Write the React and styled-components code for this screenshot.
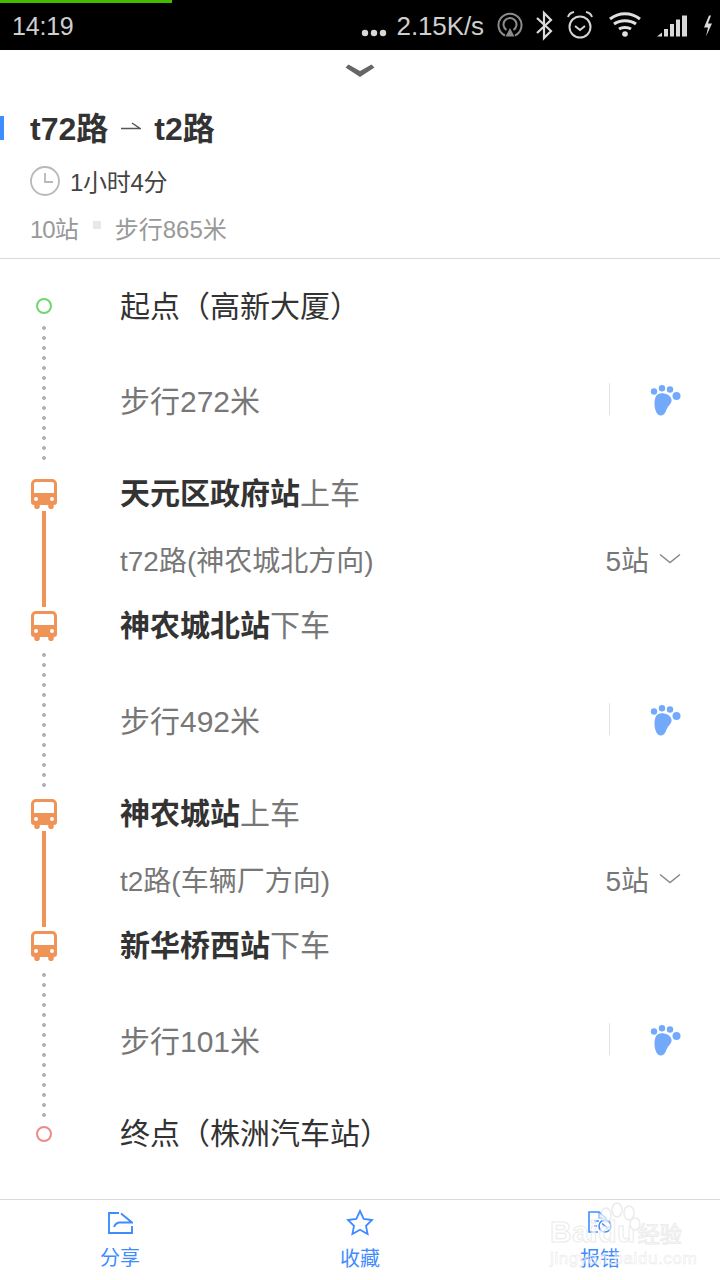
import React from "react";
import styled, { createGlobalStyle } from "styled-components";

const Global = createGlobalStyle`
  html, body { margin: 0; padding: 0; background: #fff; }
  body { font-family: "Liberation Sans", "Noto Sans CJK SC", sans-serif; }
  * { box-sizing: border-box; }
`;

const Page = styled.div`
  position: relative;
  width: 720px;
  height: 1280px;
  display: flex;
  flex-direction: column;
  overflow: hidden;
  background: #fff;
`;

const StatusBar = styled.div`
  height: 50px;
  flex: none;
  background: #000;
  display: flex;
  flex-direction: column;
  color: #cfcfcf;
`;
const Progress = styled.div`
  width: 172px;
  height: 3px;
  flex: none;
  background: #44bb00;
`;
const StatusRow = styled.div`
  flex: 1;
  display: flex;
  align-items: center;
  padding: 0 6px 0 12px;
`;
const Clock = styled.span`
  font-size: 25px;
  letter-spacing: -0.2px;
  flex: 1;
`;
const Speed = styled.span`
  font-size: 26px;
  letter-spacing: -0.1px;
  margin: 0 12px 0 10px;
`;
const MoreDots = styled.svg`
  display: block;
  flex: none;
  margin-top: 12px;
`;
const StatusIcons = styled.svg`
  display: block;
  flex: none;
`;

const Handle = styled.div`
  height: 42px;
  flex: none;
  display: flex;
  justify-content: center;
  padding-top: 13px;
`;

const Header = styled.header`
  flex: none;
  height: 167px;
  border-bottom: 1px solid #d9d9d9;
  display: flex;
  flex-direction: column;
`;
const TitleRow = styled.div`
  height: 46px;
  margin-top: 11px;
  display: flex;
  align-items: center;
`;
const Accent = styled.i`
  width: 4px;
  height: 24px;
  margin: 3px 26px 0 0;
  background: #3f8cff;
`;
const Title = styled.h1`
  margin: 0;
  font-size: 32px;
  font-weight: 700;
  color: #333;
  display: flex;
  align-items: center;
  gap: 13px;
`;
const DurationRow = styled.div`
  margin: 15px 0 0 30px;
  height: 32px;
  display: flex;
  align-items: center;
  gap: 10px;
  font-size: 24px;
  letter-spacing: -0.3px;
  color: #444;
`;
const ClockIcon = styled.svg`
  display: block;
  margin-top: 2px;
`;
const MetaRow = styled.div`
  margin: 16px 0 0 30px;
  height: 30px;
  display: flex;
  align-items: center;
  font-size: 24px;
  color: #999;
`;
const MetaCount = styled.span`
  letter-spacing: -1px;
`;
const MetaDot = styled.i`
  width: 8px;
  height: 8px;
  margin: 0 14px 4px 15px;
  background: #e8e8e8;
`;

const Steps = styled.div`
  flex: 1;
  padding-top: 27px;
`;
const Row = styled.div`
  height: ${(p) => p.$h}px;
  display: grid;
  grid-template-columns: 88px 1fr;
  padding-right: 40px;
`;
const Rail = styled.div`
  display: flex;
  flex-direction: column;
  align-items: center;
`;
const Marker = styled.div`
  height: 40px;
  flex: none;
  display: flex;
  align-items: center;
  justify-content: center;
`;
const Ring = styled.i`
  width: 16px;
  height: 16px;
  border-radius: 50%;
  border: 2px solid ${(p) => p.$c};
  margin-top: ${(p) => p.$nudge || 0}px;
`;
const Dotted = styled.i`
  width: 4px;
  flex: 1;
  margin-top: ${(p) => p.$top || 0}px;
  margin-bottom: ${(p) => p.$bottom || 0}px;
  background-image: radial-gradient(circle at 2px 2px, #b4b4b8 1.8px, transparent 2.2px);
  background-size: 4px 10px;
  background-position: 0 ${(p) => p.$offset || 0}px;
`;
const Solid = styled.i`
  width: 4px;
  flex: 1;
  background: #f09357;
  margin-top: ${(p) => p.$top || 0}px;
  margin-bottom: ${(p) => p.$bottom || 0}px;
`;
const Body = styled.div`
  height: 36px;
  margin-left: 32px;
  display: flex;
  align-items: center;
  justify-content: space-between;
  white-space: nowrap;
`;
const Node = styled.div`
  font-size: 30px;
  color: #333;
`;
const Stop = styled.b`
  font-weight: 700;
  color: #333;
`;
const Action = styled.span`
  color: #777;
`;
const Walk = styled.div`
  font-size: 30px;
  color: #777;
`;
const WalkSide = styled.div`
  width: 71px;
  height: 32px;
  border-left: 1px solid #e2e2e2;
  display: flex;
  align-items: center;
  justify-content: flex-end;
`;
const FootIcon = styled.svg`
  display: block;
  flex: none;
  margin: 4px -2px 0 0;
`;
const BusIcon = styled.svg`
  display: block;
  margin-top: 2px;
`;
const Line = styled.div`
  font-size: 28px;
  color: #777;
`;
const Count = styled.div`
  font-size: 28px;
  color: #777;
  display: flex;
  align-items: center;
  gap: 10px;
`;
const ChevronIcon = styled.svg`
  display: block;
  margin-right: -1px;
`;

const BottomBar = styled.nav`
  flex: none;
  height: 81px;
  border-top: 1px solid #d9d9d9;
  display: grid;
  grid-template-columns: repeat(3, 1fr);
`;
const Tab = styled.div`
  display: flex;
  flex-direction: column;
  align-items: center;
  padding-top: ${(p) => p.$top}px;
  color: #3f8cff;
  font-size: 20px;
  line-height: 24px;
`;
const TabIcon = styled.svg`
  display: block;
  margin-bottom: ${(p) => p.$gap}px;
`;

const Watermark = styled.div`
  position: absolute;
  left: 550px;
  top: 1200px;
  width: 135px;
  pointer-events: none;
  color: #fff;
  -webkit-text-stroke: 1px #e4e4e4;
  opacity: 0.7;
`;
const MarkMain = styled.div`
  display: flex;
  align-items: center;
  font-size: 30px;
  font-weight: 700;
  height: 36px;
  margin-top: 14px;
  letter-spacing: 0.5px;
`;
const MarkCjk = styled.span`
  font-size: 22px;
  font-weight: 400;
  margin-left: 2px;
  letter-spacing: 0;
`;
const MarkUrl = styled.div`
  font-size: 17px;
  line-height: 18px;
  letter-spacing: 0.6px;
  margin-top: 0;
  -webkit-text-stroke: 0.5px #e0e0e0;
  white-space: nowrap;
`;
const MarkPaw = styled.svg`
  position: absolute;
  left: 47px;
  top: 2px;
`;

const Bus = () => (
  <BusIcon width="26" height="30" viewBox="0 0 26 30">
    <path fill="#f09357" fillRule="evenodd" d="M5 0h16a5 5 0 0 1 5 5v18a3 3 0 0 1-3 3h-.2v1.200a2.800 2.800 0 0 1-5.600 0V26H8.800v1.200a2.800 2.800 0 0 1-5.600 0V26H3a3 3 0 0 1-3-3V5a5 5 0 0 1 5-5zM5 3a2 2 0 0 0-2 2v9h20V5a2 2 0 0 0-2-2zM5 18a2 2 0 1 0 0 4 2 2 0 0 0 0-4zM21 18a2 2 0 1 0 0 4 2 2 0 0 0 0-4z" />
  </BusIcon>
);

const Foot = () => (
  <FootIcon width="32" height="32" viewBox="0 0 32 32" fill="#72a9fb">
    <circle cx="4" cy="6.500" r="3.200" />
    <circle cx="12" cy="3.200" r="3.200" />
    <circle cx="20" cy="4.500" r="3.200" />
    <circle cx="26.500" cy="11" r="4" />
    <path d="M10 8.500c5-.8 10.500 1.500 11.500 6 .8 3.500-3 6-4.500 9-1.200 2.800-2.500 7-6 7-4.500 0-6.500-6.500-6.500-11.500 0-5 1-9.800 5.500-10.500z" />
  </FootIcon>
);

const Chevron = () => (
  <ChevronIcon width="22" height="12" viewBox="0 0 22 12" fill="none">
    <path d="M1 1.500l10 8 10-8" stroke="#888" strokeWidth="1.500" />
  </ChevronIcon>
);

const WalkRow = ({ text, offset, bottom }) => (
  <Row $h={92}>
    <Rail>
      <Dotted $offset={offset} $bottom={bottom} />
    </Rail>
    <Body>
      <Walk>{text}</Walk>
      <WalkSide>
        <Foot />
      </WalkSide>
    </Body>
  </Row>
);

const Leg = ({ board, alight, line }) => (
  <>
    <Row $h={68}>
      <Rail>
        <Marker><Bus /></Marker>
        <Solid $top={-2} />
      </Rail>
      <Body>
        <Node><Stop>{board}</Stop><Action>上车</Action></Node>
      </Body>
    </Row>
    <Row $h={64}>
      <Rail><Solid $bottom={-2} /></Rail>
      <Body>
        <Line>{line}</Line>
        <Count>5站<Chevron /></Count>
      </Body>
    </Row>
    <Row $h={96}>
      <Rail>
        <Marker><Bus /></Marker>
        <Dotted $top={8} />
      </Rail>
      <Body>
        <Node><Stop>{alight}</Stop><Action>下车</Action></Node>
      </Body>
    </Row>
  </>
);

export default function App() {
  return (
    <Page>
      <Global />
      <StatusBar>
        <Progress />
        <StatusRow>
          <Clock>14:19</Clock>
          <MoreDots width="26" height="8" viewBox="0 0 26 8" fill="#d8d8d8">
            <circle cx="4" cy="4" r="3.200" />
            <circle cx="13" cy="4" r="3.200" />
            <circle cx="22" cy="4" r="3.200" />
          </MoreDots>
          <Speed>2.15K/s</Speed>
          <StatusIcons width="218" height="40" viewBox="0 0 218 40" fill="none">
            {/* hotspot */}
            <g stroke="#8c8c8c" strokeWidth="2">
              <path d="M9 28.500a11.500 11.500 0 1 1 10 0" />
              <path d="M10.500 23a6.500 6.500 0 1 1 7 0" />
            </g>
            <path d="M14 21l4.500 8.500h-9z" fill="#8c8c8c" />
            {/* bluetooth */}
            <path d="M41 11l14 13-7 7V6l7 7-14 13" stroke="#dcdcdc" strokeWidth="2.200" />
            {/* alarm */}
            <g stroke="#d4d4d4" strokeWidth="2">
              <circle cx="84" cy="20" r="10.500" />
              <path d="M79 19l5 4 5-4" />
              <path d="M72 10c1-3 3-4.500 6-5M96 10c-1-3-3-4.500-6-5" />
            </g>
            {/* wifi */}
            <g stroke="#e0e0e0" strokeWidth="3">
              <path d="M114 12c9-7 21-7 30 0" />
              <path d="M118 17c6-4.500 16-4.500 22 0" />
              <path d="M123 22c3-2 9-2 12 0" />
            </g>
            <circle cx="129" cy="27" r="2.800" fill="#e0e0e0" />
            {/* signal */}
            <g fill="#d8d8d8">
              <path d="M161 29.500l5-4v4z" />
              <rect x="168" y="22" width="4" height="7.500" />
              <rect x="174" y="17" width="4" height="12.500" />
              <rect x="180" y="12.500" width="4" height="17" />
              <rect x="186" y="8.500" width="5" height="21" />
            </g>
            {/* charge */}
            <path d="M213 8.500l-5 12h4l-2 9 6-13h-4l3-8z" fill="#dcdcdc" />
          </StatusIcons>
        </StatusRow>
      </StatusBar>

      <Handle>
        <svg width="30" height="16" viewBox="0 0 30 16">
          <path d="M3.500 1.500L15 8 26.500 1.500 29.500 4.500 15 14 .5 4.500z" fill="#666" />
        </svg>
      </Handle>

      <Header>
        <TitleRow>
          <Accent />
          <Title>
            t72路
            <svg width="20" height="10" viewBox="0 0 20 10" fill="none">
              <path d="M0 7.500h19L11 2" stroke="#555" strokeWidth="1.500" />
            </svg>
            t2路
          </Title>
        </TitleRow>
        <DurationRow>
          <ClockIcon width="30" height="30" viewBox="0 0 30 30" fill="none" stroke="#b8b8b8" strokeWidth="1.800">
            <circle cx="15" cy="15" r="14" />
            <path d="M15 7v9h8" />
          </ClockIcon>
          1小时4分
        </DurationRow>
        <MetaRow>
          <MetaCount>10站</MetaCount>
          <MetaDot />
          步行865米
        </MetaRow>
      </Header>

      <Steps>
        <Row $h={95}>
          <Rail>
            <Marker><Ring $c="#6fd86f" /></Marker>
            <Dotted />
          </Rail>
          <Body><Node>起点（高新大厦）</Node></Body>
        </Row>
        <WalkRow text="步行272米" offset={5} bottom={13} />
        <Leg board="天元区政府站" alight="神农城北站" line="t72路(神农城北方向)" />
        <WalkRow text="步行492米" offset={2} bottom={6} />
        <Leg board="神农城站" alight="新华桥西站" line="t2路(车辆厂方向)" />
        <WalkRow text="步行101米" offset={2} bottom={-4} />
        <Row $h={40}>
          <Rail>
            <Marker><Ring $c="#f08a8a" $nudge={1} /></Marker>
          </Rail>
          <Body><Node>终点（株洲汽车站）</Node></Body>
        </Row>
      </Steps>

      <BottomBar>
        <Tab $top={12}>
          <TabIcon $gap={11} width="26" height="23" viewBox="0 0 26 23" fill="none" stroke="#3f8cff" strokeWidth="1.900">
            <path d="M12 1H2v20h23v-7" />
            <path d="M14 1.500l11 9H13c-3 0-5 2-6 4.500" />
          </TabIcon>
          分享
        </Tab>
        <Tab $top={9}>
          <TabIcon $gap={11} width="28" height="27" viewBox="0 0 28 27" fill="none" stroke="#3f8cff" strokeWidth="1.800">
            <path d="M14 2l3.700 8 8.300 1-6 5.800 1.600 8.200-7.600-4.200L6.400 25 8 16.800 2 11l8.300-1z" />
          </TabIcon>
          收藏
        </Tab>
        <Tab $top={10}>
          <TabIcon $gap={11} width="26" height="26" viewBox="0 0 26 26" fill="none" stroke="#3f8cff" strokeWidth="1.600">
            <path d="M11 22H2V2h10l7 6v2" />
            <path d="M12 2v6h7" opacity="0.5" />
            <circle cx="18" cy="16" r="6" />
            <path d="M15 13.500l6 5M7 11h5M7 16h3" />
          </TabIcon>
          报错
        </Tab>
      </BottomBar>

      <Watermark>
        <MarkPaw width="46" height="40" viewBox="0 0 46 40" fill="#fff" stroke="#e4e4e4" strokeWidth="1.500">
          <ellipse cx="9" cy="13" rx="5" ry="7" />
          <ellipse cx="20" cy="8" rx="5" ry="7" />
          <ellipse cx="32" cy="11" rx="5" ry="7" />
          <ellipse cx="38" cy="22" rx="5" ry="6" />
        </MarkPaw>
        <MarkMain>Baidu<MarkCjk>经验</MarkCjk></MarkMain>
        <MarkUrl>jingyan.baidu.com</MarkUrl>
      </Watermark>
    </Page>
  );
}
